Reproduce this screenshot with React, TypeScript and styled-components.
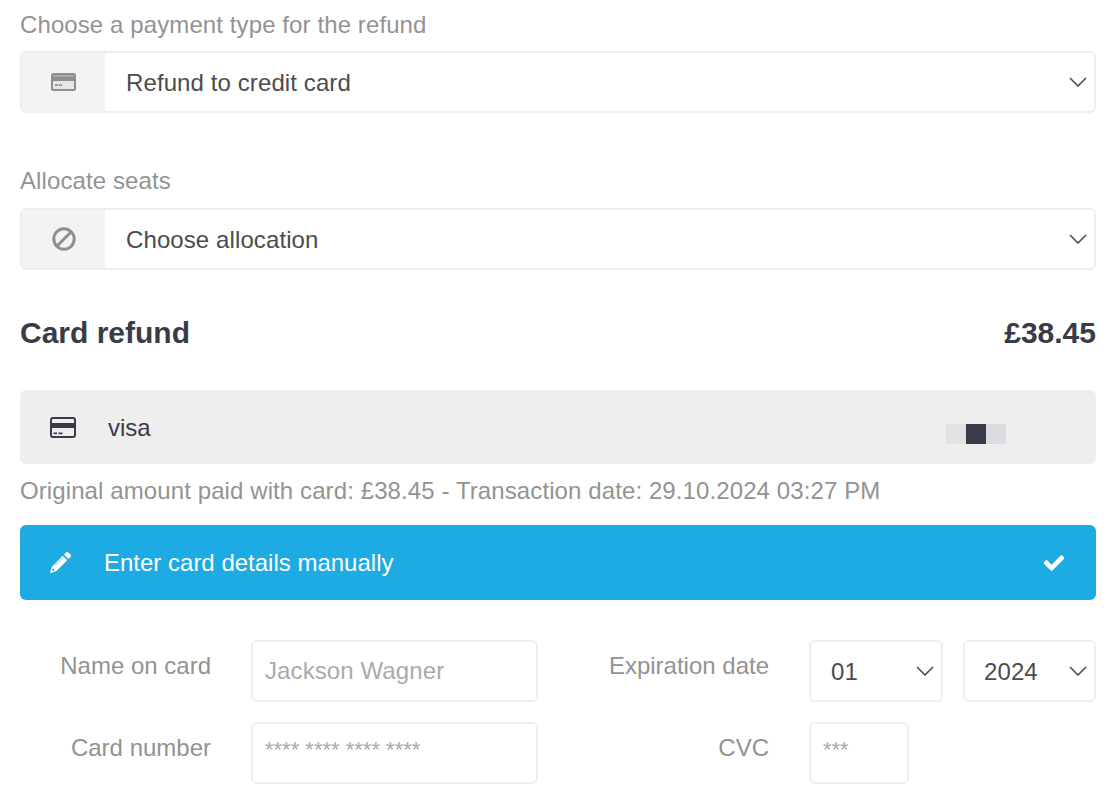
import React from 'react';
import styled, { createGlobalStyle } from 'styled-components';
import { FaCheck } from 'react-icons/fa';

const Global = createGlobalStyle`
  html, body { margin: 0; padding: 0; background: #fff; }
  body { font-family: "Liberation Sans", Arial, sans-serif; letter-spacing: 0.1px; }
  * { box-sizing: border-box; }
`;

const Page = styled.div`
  width: 1120px;
  height: 808px;
  overflow: hidden;
  padding: 11px 24px 0 20px;
  display: flex;
  flex-direction: column;
`;

const SectionLabel = styled.div<{ $mb: number }>`
  font-size: 24px;
  line-height: 28px;
  color: #939393;
  margin-bottom: ${p => p.$mb}px;
`;

const SelectGroup = styled.div<{ $mb: number }>`
  display: flex;
  height: 62px;
  border: 2px solid #eeeeee;
  border-radius: 6px;
  overflow: hidden;
  margin-bottom: ${p => p.$mb}px;
`;

const Addon = styled.div`
  flex: 0 0 83px;
  background: #f3f3f3;
  display: flex;
  align-items: center;
  justify-content: center;
  color: #8f8f8f;
`;

const SelectShell = styled.div`
  position: relative;
  flex: 1;
  display: flex;
`;

const NativeSelect = styled.select<{ $pad: number }>`
  appearance: none;
  border: 0;
  outline: 0;
  background: #fff;
  width: 100%;
  height: 100%;
  font: inherit;
  font-size: 24px;
  letter-spacing: 0.1px;
  color: #4c4c4c;
  padding: 0 40px 0 ${p => p.$pad}px;
`;

const Chevron = styled.svg<{ $right: number }>`
  position: absolute;
  top: 50%;
  right: ${p => p.$right}px;
  width: 18px;
  height: 10px;
  margin-top: -5px;
  pointer-events: none;
`;

const HeadingRow = styled.div`
  display: flex;
  justify-content: space-between;
  align-items: center;
  height: 34px;
  margin-bottom: 40px;
  font-size: 30px;
  font-weight: 700;
  letter-spacing: 0;
  color: #373c48;
`;

const VisaBar = styled.div`
  display: flex;
  align-items: center;
  height: 74px;
  background: #eeeeee;
  border-radius: 6px;
  padding: 0 0 0 30px;
  color: #373c48;
  font-size: 24px;
`;

const VisaName = styled.span`
  margin-left: 32px;
  padding-top: 2px;
  flex: 1;
  letter-spacing: 0;
`;

const Mask = styled.div`
  display: flex;
  margin: 14px 90px 0 0;
`;

const MaskCell = styled.span<{ $c: string }>`
  width: 20px;
  height: 20px;
  background: ${p => p.$c};
`;

const Note = styled.div`
  font-size: 24px;
  line-height: 28px;
  color: #939393;
  margin: 13px 0 20px;
`;

const ManualBar = styled.div`
  display: flex;
  align-items: center;
  height: 75px;
  background: #1eaae2;
  border-radius: 6px;
  padding: 0 32px 0 30px;
  color: #fff;
  font-size: 24px;
  letter-spacing: 0;
  margin-bottom: 40px;
`;

const ManualText = styled.span`
  flex: 1;
  margin-left: 33px;
`;

const FieldGrid = styled.div`
  display: grid;
  grid-template-columns: 191px 287px 191px 287px;
  grid-auto-rows: 62px;
  column-gap: 40px;
  row-gap: 20px;
`;

const FieldLabel = styled.label`
  font-size: 24px;
  line-height: 28px;
  letter-spacing: 0;
  color: #939393;
  text-align: right;
  padding-top: 12px;
`;

const TextInput = styled.input<{ $w?: number; $small?: boolean }>`
  width: ${p => (p.$w ? `${p.$w}px` : '100%')};
  height: 62px;
  border: 2px solid #eeeeee;
  border-radius: 6px;
  outline: 0;
  font-family: inherit;
  font-size: ${p => (p.$small ? 22 : 24)}px;
  letter-spacing: ${p => (p.$small ? 0 : 0.1)}px;
  color: #4c4c4c;
  padding: ${p => (p.$small ? '0 12px 6px' : '0 12px')};
  &::placeholder { color: #aaaaaa; opacity: 1; }
`;

const DatePair = styled.div`
  display: grid;
  grid-template-columns: 134px 133px;
  column-gap: 20px;
`;

const SmallSelect = styled.div`
  position: relative;
  height: 62px;
  border: 2px solid #eeeeee;
  border-radius: 6px;
  overflow: hidden;
`;

const CreditIconSolid = () => (
  <svg width="25" height="18" viewBox="0 0 25 18">
    <rect x="0" y="0" width="25" height="18" rx="2.5" fill="#8f8f8f" />
    <rect x="2" y="2" width="21" height="2" fill="#a8a8a8" />
    <rect x="2" y="8" width="21" height="8" fill="#e6e6e6" />
    <rect x="4" y="11" width="3" height="2" fill="#9a9a9a" />
    <rect x="8" y="11" width="3" height="2" fill="#9a9a9a" />
  </svg>
);

const BanIcon = () => (
  <svg width="24" height="24" viewBox="0 0 24 24" fill="none" stroke="#8f8f8f" strokeWidth="3">
    <circle cx="12" cy="12" r="10.2" />
    <path d="M5 19 19 5" />
  </svg>
);

const CreditIconOutline = () => (
  <svg width="26" height="21" viewBox="0 0 26 21">
    <rect x="1" y="1" width="24" height="19" rx="2" fill="none" stroke="#373c48" strokeWidth="2" />
    <rect x="1" y="6" width="24" height="5" fill="#373c48" />
    <rect x="3.5" y="15.5" width="3.5" height="1.7" fill="#373c48" />
    <rect x="8.5" y="15.5" width="4" height="1.7" fill="#373c48" />
  </svg>
);

const PencilIcon = () => (
  <svg width="21" height="21" viewBox="0 0 20 20">
    <path fill="#fff" d="M13.4 2.4l1.6-1.7a2 2 0 0 1 2.8 0l1.5 1.5a2 2 0 0 1 0 2.8l-1.7 1.6z" />
    <path fill="#fff" d="M12.2 3.6l4.2 4.2L6.2 18l-5.4 1.9a.5.5 0 0 1-.7-.7L2 13.8z" />
    <path stroke="#1eaae2" strokeWidth="0.6" d="M4.2 13.4l8.8-8.6" />
    <circle cx="3" cy="17" r="1.1" fill="#1eaae2" />
  </svg>
);

const CheckIcon = styled(FaCheck)`
  stroke: currentColor;
  stroke-width: 24px;
`;

const Arrow = ({ right }: { right: number }) => (
  <Chevron $right={right} viewBox="0 0 18 10" fill="none" stroke="#4c4c4c" strokeWidth="1.6">
    <path d="M1 1l8 8 8-8" />
  </Chevron>
);

export default function App() {
  return (
    <Page>
      <Global />
      <SectionLabel $mb={12}>Choose a payment type for the refund</SectionLabel>
      <SelectGroup $mb={54}>
        <Addon><CreditIconSolid /></Addon>
        <SelectShell>
          <NativeSelect $pad={21} defaultValue="credit"><option value="credit">Refund to credit card</option></NativeSelect>
          <Arrow right={7} />
        </SelectShell>
      </SelectGroup>
      <SectionLabel $mb={13}>Allocate seats</SectionLabel>
      <SelectGroup $mb={46}>
        <Addon><BanIcon /></Addon>
        <SelectShell>
          <NativeSelect $pad={21} defaultValue="none"><option value="none">Choose allocation</option></NativeSelect>
          <Arrow right={7} />
        </SelectShell>
      </SelectGroup>
      <HeadingRow><span>Card refund</span><span>£38.45</span></HeadingRow>
      <VisaBar>
        <CreditIconOutline />
        <VisaName>visa</VisaName>
        <Mask>
          <MaskCell $c="#e3e3e3" />
          <MaskCell $c="#373c48" />
          <MaskCell $c="#dcdde0" />
        </Mask>
      </VisaBar>
      <Note>Original amount paid with card: £38.45 - Transaction date: 29.10.2024 03:27 PM</Note>
      <ManualBar>
        <PencilIcon />
        <ManualText>Enter card details manually</ManualText>
        <CheckIcon size={20} />
      </ManualBar>
      <FieldGrid>
        <FieldLabel>Name on card</FieldLabel>
        <TextInput placeholder="Jackson Wagner" />
        <FieldLabel>Expiration date</FieldLabel>
        <DatePair>
          <SmallSelect>
            <NativeSelect $pad={20} defaultValue="01"><option value="01">01</option></NativeSelect>
            <Arrow right={7} />
          </SmallSelect>
          <SmallSelect>
            <NativeSelect $pad={19} defaultValue="2024"><option value="2024">2024</option></NativeSelect>
            <Arrow right={7} />
          </SmallSelect>
        </DatePair>
        <FieldLabel>Card number</FieldLabel>
        <TextInput $small placeholder="**** **** **** ****" />
        <FieldLabel>CVC</FieldLabel>
        <TextInput $small $w={100} placeholder="***" />
      </FieldGrid>
    </Page>
  );
}
